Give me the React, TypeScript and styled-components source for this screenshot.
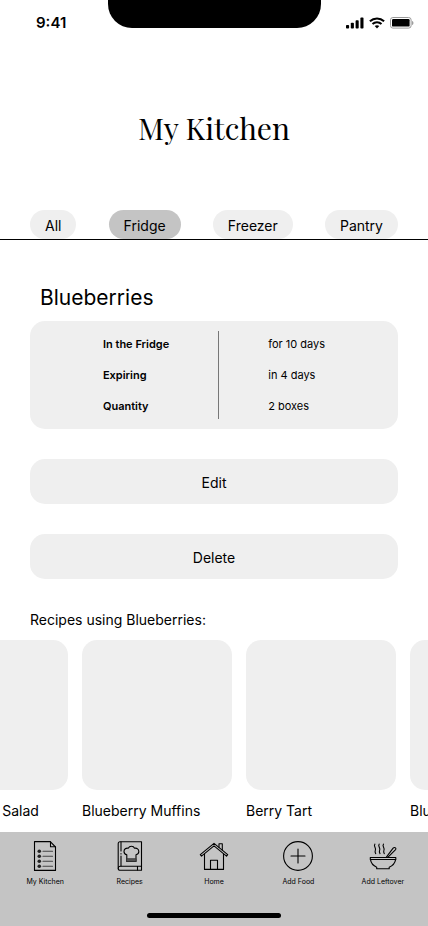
import React from "react";
import styled, { createGlobalStyle } from "styled-components";

const GlobalStyle = createGlobalStyle`
  *, *::before, *::after { box-sizing: border-box; }
  body {
    margin: 0;
    background: #fff;
    color: #000;
    font-family: Inter, "Liberation Sans", sans-serif;
    font-size: 14px;
    line-height: 20px;
  }
  h1, h2, h3, p, dl, dt, dd, ul { margin: 0; padding: 0; font-weight: 400; }
  ul { list-style: none; }
  button { border: 0; font: inherit; color: inherit; cursor: pointer; }
`;

const Page = styled.div`
  display: flex;
  flex-direction: column;
  min-height: 100vh;
  overflow: hidden;
`;

const StatusBar = styled.div`
  display: grid;
  grid-template-columns: 1fr 213px 1fr;
  height: 44px;
`;

const Clock = styled.time`
  padding: 13px 0 0 36px;
  font-size: 15px;
  font-weight: 600;
`;

const Notch = styled.div`
  height: 28px;
  border-radius: 0 0 24px 24px;
  background: #000;
`;

const StatusIcons = styled.div`
  display: flex;
  justify-content: flex-end;
  gap: 5px;
  padding: 17px 14px 0 0;
`;

const Title = styled.h1`
  padding: 64px 16px 62px;
  font-family: "Playfair Display", "Liberation Serif", serif;
  font-size: 30px;
  line-height: 40px;
  text-align: center;
`;

const Filters = styled.nav`
  display: flex;
  justify-content: space-between;
  padding: 0 30px;
  border-bottom: 1px solid #000;
`;

const Pill = styled.button<{ $active?: boolean }>`
  height: 29px;
  padding: 2px 15px 0;
  border-radius: 15px;
  background: ${(p) => (p.$active ? "#c4c4c4" : "#efefef")};
`;

const Content = styled.main`
  display: flex;
  flex-direction: column;
  gap: 30px;
  padding: 42px 30px 10px;
`;

const FoodName = styled.h2`
  padding: 0 10px 7px;
  font-size: 21px;
  line-height: 32px;
`;

const Details = styled.dl`
  display: grid;
  grid-template-columns: auto 1px auto;
  justify-content: center;
  column-gap: 49px;
  row-gap: 5px;
  padding: 10px;
  border-radius: 15px;
  background: #efefef;
  font-size: 11px;
  line-height: 26px;

  &::before {
    content: "";
    grid-column: 2;
    grid-row: 1 / 4;
    background: #777;
  }
`;

const Term = styled.dt`
  grid-column: 1;
  font-weight: 600;
`;

const Value = styled.dd`
  grid-column: 3;
`;

const Action = styled.button`
  height: 45px;
  padding: 2px 15px 0;
  border-radius: 15px;
  background: #efefef;
`;

const SectionTitle = styled.h3`
  padding-top: 1px;
  font-size: 14px;
`;

const Carousel = styled.ul`
  display: flex;
  gap: 14px;
  margin-left: -82px;
  padding-bottom: 11px;
`;

const Recipe = styled.li`
  flex: 0 0 150px;
  white-space: nowrap;
`;

const Thumbnail = styled.div`
  height: 150px;
  margin-bottom: 11px;
  border-radius: 15px;
  background: #efefef;
`;

const TabBar = styled.nav`
  display: flex;
  flex-direction: column;
  align-items: center;
  justify-content: space-between;
  height: 94px;
  margin-top: auto;
  padding: 9px 3px 8px;
  background: #c4c4c4;
`;

const Tabs = styled.div`
  display: flex;
  width: 100%;
`;

const Tab = styled.button`
  display: flex;
  flex: 1 1 0;
  flex-direction: column;
  align-items: center;
  gap: 6px;
  padding: 0;
  background: none;
  font-size: 7px;
  line-height: 10px;
`;

const HomeIndicator = styled.div`
  width: 134px;
  height: 5px;
  border-radius: 3px;
  background: #000;
`;

const Icon = ({ children }: { children: React.ReactNode }) => (
  <svg
    width="30"
    height="30"
    viewBox="0 0 30 30"
    fill="none"
    stroke="#000"
    strokeWidth="1.1"
    strokeLinejoin="round"
    strokeLinecap="round"
    aria-hidden="true"
  >
    {children}
  </svg>
);

const ListIcon = () => (
  <Icon>
    <path d="M5 .6H20.3L25.5 6V29.4H4.5V.6Z" />
    <path d="M20.5 .8V5.7H25.3" />
    {[10.3, 15.3, 20.3, 25.2].map((y) => (
      <g key={y}>
        <circle cx="9.3" cy={y} r="1.8" fill="#222" stroke="none" />
        <path d={`M13 ${y}H22.5`} stroke="#444" />
      </g>
    ))}
  </Icon>
);

const RecipeBookIcon = () => (
  <Icon>
    <path d="M5 .7H26.5V29.3H5.2C4 29.3 3.2 28.5 3.2 27.4V2.7C3.2 1.5 4 .7 5 .7Z" />
    <path d="M3.3 27.2C3.3 26 4 25.3 5.2 25.3H26.3M22.5 25.5V29" />
    <path d="M6 1V10M6 12.6V13M6 15V25" />
    <path d="M11.8 20.4V13.8C9.8 13.3 9 11.9 9 10.4C9 8.2 11 6.7 13.2 7.2C14 5.7 15 5.2 16.4 5.2C17.9 5.2 19 5.9 19.6 7.2C22 6.8 23.8 8.2 23.8 10.4C23.8 12 22.8 13.3 21 13.8V20.4Z" />
    <path d="M12 17.7H21V20.4H12Z" fill="#555" stroke="#333" strokeWidth=".8" />
  </Icon>
);

const HouseIcon = () => (
  <Icon>
    <path d="M1.3 13.7L15 2.3L28.7 13.7L27.5 15.2L15 4.9L2.5 15.2Z" />
    <path d="M5.5 13.1V28.4H24.5V13.1M11.5 28.2V19.3H18.5V28.2" />
    <path d="M20 6.2V2.7H23.3V9" />
  </Icon>
);

const AddIcon = () => (
  <Icon>
    <circle cx="15" cy="15" r="14.4" />
    <path d="M15 8V22M8 15H22" />
  </Icon>
);

const BowlIcon = () => (
  <Icon>
    <path d="M2.3 16.5H27.8V18.5H2.3Z" />
    <path d="M2.5 18.7C3 22 5.2 24.8 8.7 26.2V27.7H21.2V26.2C24.8 24.8 27 22 27.6 18.7" />
    <path d="M18.2 16.3L25.1 7.2C26 6.2 27 6.3 27.5 6.9C28.1 7.5 28 8.4 27.1 9.2L19.8 16.3" />
    <path d="M6.9 3.1C5 5.3 8.7 7 7.3 9.5C6.9 10.3 7.1 11.6 7.7 12.6M11.2 3.1C9.3 5.3 13 7 11.6 9.5C11.2 10.3 11.4 11.6 12 12.6M15.5 3.1C13.6 5.3 17.3 7 15.9 9.5C15.5 10.3 15.7 11.6 16.3 12.6" />
  </Icon>
);

const SignalIcon = () => (
  <svg width="18" height="12" viewBox="0 0 18 12" aria-hidden="true">
    <rect x="0" y="8" width="3.1" height="3.5" rx=".8" />
    <rect x="4.8" y="5.7" width="3.1" height="5.8" rx=".8" />
    <rect x="9.6" y="3.2" width="3.1" height="8.3" rx=".8" />
    <rect x="14.4" y=".6" width="3.1" height="10.9" rx=".8" />
  </svg>
);

const WifiIcon = () => (
  <svg width="16" height="12" viewBox="0 0 16 12" fill="none" stroke="#000" strokeWidth="2" aria-hidden="true">
    <path d="M.9 4.3C5 .4 11 .4 15.1 4.3M3.5 7C6 4.6 10 4.6 12.5 7" />
    <path d="M8 11.4L5.7 9.1C7 8 9 8 10.3 9.1Z" fill="#000" stroke="none" />
  </svg>
);

const BatteryIcon = () => (
  <svg width="24" height="12" viewBox="0 0 24 12" aria-hidden="true">
    <rect x=".5" y=".5" width="20.6" height="10.6" rx="2.4" fill="none" stroke="#999" />
    <rect x="2" y="2" width="17.6" height="7.6" rx="1.2" />
    <path d="M22.2 4V8C23 7.6 23.4 6.8 23.4 6S23 4.4 22.2 4Z" fill="#888" />
  </svg>
);

const filters = ["All", "Fridge", "Freezer", "Pantry"];

const details = [
  ["In the Fridge", "for 10 days"],
  ["Expiring", "in 4 days"],
  ["Quantity", "2 boxes"],
];

const recipes = ["Mixed Berry Salad", "Blueberry Muffins", "Berry Tart", "Blueberry Pie"];

const tabs = [
  { label: "My Kitchen", Glyph: ListIcon },
  { label: "Recipes", Glyph: RecipeBookIcon },
  { label: "Home", Glyph: HouseIcon },
  { label: "Add Food", Glyph: AddIcon },
  { label: "Add Leftover", Glyph: BowlIcon },
];

export default function App() {
  return (
    <Page>
      <GlobalStyle />
      <StatusBar>
        <Clock>9:41</Clock>
        <Notch />
        <StatusIcons>
          <SignalIcon />
          <WifiIcon />
          <BatteryIcon />
        </StatusIcons>
      </StatusBar>
      <Title>My Kitchen</Title>
      <Filters aria-label="Storage">
        {filters.map((name) => (
          <Pill key={name} type="button" $active={name === "Fridge"} aria-pressed={name === "Fridge"}>
            {name}
          </Pill>
        ))}
      </Filters>
      <Content>
        <section>
          <FoodName>Blueberries</FoodName>
          <Details>
            {details.map(([term, value]) => (
              <React.Fragment key={term}>
                <Term>{term}</Term>
                <Value>{value}</Value>
              </React.Fragment>
            ))}
          </Details>
        </section>
        <Action type="button">Edit</Action>
        <Action type="button">Delete</Action>
        <SectionTitle>Recipes using Blueberries:</SectionTitle>
      </Content>
      <Carousel>
        {recipes.map((name) => (
          <Recipe key={name}>
            <Thumbnail />
            {name}
          </Recipe>
        ))}
      </Carousel>
      <TabBar aria-label="Main">
        <Tabs>
          {tabs.map(({ label, Glyph }) => (
            <Tab key={label} type="button">
              <Glyph />
              {label}
            </Tab>
          ))}
        </Tabs>
        <HomeIndicator />
      </TabBar>
    </Page>
  );
}
